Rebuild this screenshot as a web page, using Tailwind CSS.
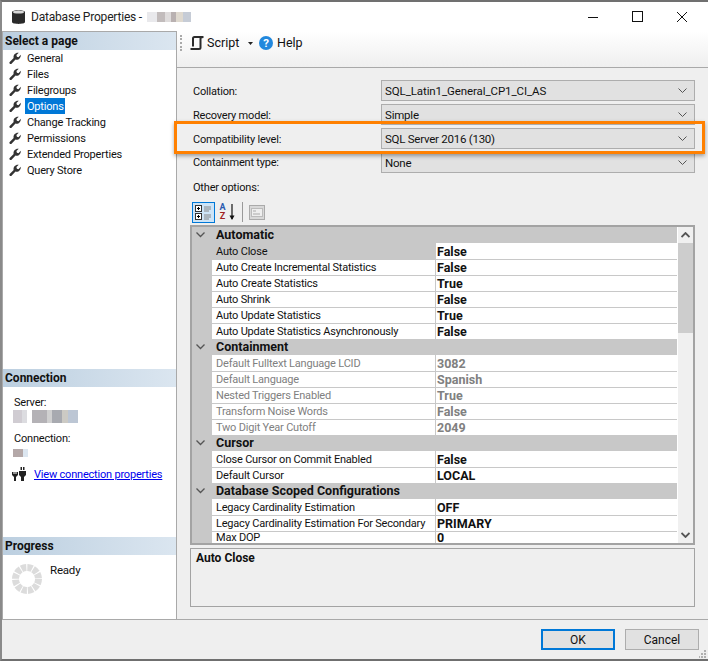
<!DOCTYPE html>
<html lang="en">
<head>
    <meta charset="UTF-8">
    <title>Database Properties</title>
    <script src="https://cdn.jsdelivr.net/npm/@tailwindcss/browser@4"></script>
</head>
<body class="bg-white font-['Roboto',sans-serif] text-[11px] tracking-[-0.2px] leading-4 text-[#111] overflow-hidden">
<div class="relative w-[708px] h-[661px] overflow-hidden flex flex-col border-t-2 border-t-[#707070] border-l-2 border-l-[#8a8a8a] border-b-2 border-b-[#6f6f6f]">

    <!-- Title bar -->
    <div class="h-[29px] flex items-center bg-white shrink-0">
        <svg class="ml-[9px] w-[15px] h-[16px]" viewBox="0 0 15 16"><path d="M1 3C1 0.500 14 0.500 14 3V13C14 15.500 1 15.500 1 13Z" fill="#2a2a2a"/><ellipse cx="7.500" cy="3" rx="5.500" ry="1.500" fill="#d8d8d8"/></svg>
        <span class="ml-[5px] text-[12px] text-[#222]">Database Properties -</span>
        <span class="ml-[5px] flex h-[10px] opacity-80">
            <span class="w-[10px] bg-[#e4e4e8]"></span><span class="w-[8px] bg-[#b4acac]"></span><span class="w-[6px] bg-[#d8d4d4]"></span><span class="w-[5px] bg-[#a89e9e]"></span><span class="w-[7px] bg-[#d8d0c4]"></span><span class="w-[8px] bg-[#b8c0cc]"></span>
        </span>
        <div class="ml-auto flex items-center gap-[33px] mr-[20px]">
            <svg class="w-[12px] h-[12px]" viewBox="0 0 12 12"><path d="M1 6.500H11" stroke="#111" fill="none"/></svg>
            <svg class="w-[11px] h-[11px]" viewBox="0 0 11 11"><rect x="0.500" y="0.500" width="10" height="10" stroke="#111" fill="none"/></svg>
            <svg class="w-[12px] h-[12px]" viewBox="0 0 12 12"><path d="M1 1L11 11M11 1L1 11" stroke="#111" fill="none"/></svg>
        </div>
    </div>

    <div class="flex flex-1 min-h-0">
        <!-- Left panel -->
        <div class="w-[175px] shrink-0 bg-white border-t border-t-[#a9a9a9] border-r border-r-[#a9a9a9] border-l border-l-[#a9a9a9] flex flex-col h-[589px]">
            <div class="h-[18px] px-[2px] font-bold text-[12px] tracking-normal bg-gradient-to-r from-[#bccfe0] to-[#dbe6f0] flex items-center">Select a page</div>
            <ul class="h-[319px]">
                <li class="h-[16px] flex items-center pl-[6px]"><svg class="w-[13px] h-[13px]" viewBox="0 0 14 14"><path d="M0.500 11L5 6.500C4.300 3 7 0.300 10.500 0.800L8 3.300L8.500 5.200L10.200 5.700L12.700 3C13 6.500 10 9.200 7 8.200L2.500 12.800C1.500 13.500 0 12.200 0.500 11Z" fill="#333"/></svg><span class="ml-[3px] px-[2px] pt-[2px] leading-[14px]">General</span></li>
                <li class="h-[16px] flex items-center pl-[6px]"><svg class="w-[13px] h-[13px]" viewBox="0 0 14 14"><path d="M0.500 11L5 6.500C4.300 3 7 0.300 10.500 0.800L8 3.300L8.500 5.200L10.200 5.700L12.700 3C13 6.500 10 9.200 7 8.200L2.500 12.800C1.500 13.500 0 12.200 0.500 11Z" fill="#333"/></svg><span class="ml-[3px] px-[2px] pt-[2px] leading-[14px]">Files</span></li>
                <li class="h-[16px] flex items-center pl-[6px]"><svg class="w-[13px] h-[13px]" viewBox="0 0 14 14"><path d="M0.500 11L5 6.500C4.300 3 7 0.300 10.500 0.800L8 3.300L8.500 5.200L10.200 5.700L12.700 3C13 6.500 10 9.200 7 8.200L2.500 12.800C1.500 13.500 0 12.200 0.500 11Z" fill="#333"/></svg><span class="ml-[3px] px-[2px] pt-[2px] leading-[14px]">Filegroups</span></li>
                <li class="h-[16px] flex items-center pl-[6px]"><svg class="w-[13px] h-[13px]" viewBox="0 0 14 14"><path d="M0.500 11L5 6.500C4.300 3 7 0.300 10.500 0.800L8 3.300L8.500 5.200L10.200 5.700L12.700 3C13 6.500 10 9.200 7 8.200L2.500 12.800C1.500 13.500 0 12.200 0.500 11Z" fill="#333"/></svg><span class="ml-[3px] w-[40px] px-[2px] pt-[2px] leading-[14px] bg-[#0078d7] text-white">Options</span></li>
                <li class="h-[16px] flex items-center pl-[6px]"><svg class="w-[13px] h-[13px]" viewBox="0 0 14 14"><path d="M0.500 11L5 6.500C4.300 3 7 0.300 10.500 0.800L8 3.300L8.500 5.200L10.200 5.700L12.700 3C13 6.500 10 9.200 7 8.200L2.500 12.800C1.500 13.500 0 12.200 0.500 11Z" fill="#333"/></svg><span class="ml-[3px] px-[2px] pt-[2px] leading-[14px]">Change Tracking</span></li>
                <li class="h-[16px] flex items-center pl-[6px]"><svg class="w-[13px] h-[13px]" viewBox="0 0 14 14"><path d="M0.500 11L5 6.500C4.300 3 7 0.300 10.500 0.800L8 3.300L8.500 5.200L10.200 5.700L12.700 3C13 6.500 10 9.200 7 8.200L2.500 12.800C1.500 13.500 0 12.200 0.500 11Z" fill="#333"/></svg><span class="ml-[3px] px-[2px] pt-[2px] leading-[14px]">Permissions</span></li>
                <li class="h-[16px] flex items-center pl-[6px]"><svg class="w-[13px] h-[13px]" viewBox="0 0 14 14"><path d="M0.500 11L5 6.500C4.300 3 7 0.300 10.500 0.800L8 3.300L8.500 5.200L10.200 5.700L12.700 3C13 6.500 10 9.200 7 8.200L2.500 12.800C1.500 13.500 0 12.200 0.500 11Z" fill="#333"/></svg><span class="ml-[3px] px-[2px] pt-[2px] leading-[14px]">Extended Properties</span></li>
                <li class="h-[16px] flex items-center pl-[6px]"><svg class="w-[13px] h-[13px]" viewBox="0 0 14 14"><path d="M0.500 11L5 6.500C4.300 3 7 0.300 10.500 0.800L8 3.300L8.500 5.200L10.200 5.700L12.700 3C13 6.500 10 9.200 7 8.200L2.500 12.800C1.500 13.500 0 12.200 0.500 11Z" fill="#333"/></svg><span class="ml-[3px] px-[2px] pt-[2px] leading-[14px]">Query Store</span></li>
            </ul>
            <div class="h-[18px] px-[2px] font-bold text-[12px] tracking-normal bg-gradient-to-r from-[#bccfe0] to-[#dbe6f0] flex items-center">Connection</div>
            <div class="h-[150px] pl-[11px] pt-[8px]">
                <div>Server:</div>
                <div class="flex h-[13px] -ml-[1px] -mt-[1px]">
                    <span class="w-[9px] bg-[#d0ccd2]"></span><span class="w-[5px] bg-[#dcdce0]"></span><span class="w-[5px] bg-white"></span><span class="w-[15px] bg-[#b4b2b6]"></span><span class="w-[5px] bg-[#d0d0d0]"></span><span class="w-[10px] bg-[#a8aab0]"></span><span class="w-[6px] bg-[#cccac4]"></span><span class="w-[10px] bg-[#bcc6d4]"></span>
                </div>
                <div class="mt-[8px]">Connection:</div>
                <div class="mt-[2px] -ml-[1px] flex h-[8px]"><span class="w-[10px] bg-[#b4a8a8]"></span><span class="w-[5px] bg-[#dce6f0]"></span></div>
                <div class="mt-[9px] h-[16px] flex items-center">
                    <svg class="w-[14px] h-[14px] -ml-[2px]" viewBox="0 0 14 14" fill="#222"><path d="M0 5H1.500V7H2.500V5H3.500V7H4.500V5H6V8L4 10V14H2V10L0 8Z"/><path d="M7 4H14V8L12 10V14H9V10L7 8Z"/><path d="M8.500 0H10V3H8.500ZM11 0H12.500V3H11Z"/></svg>
                    <a class="ml-[8px] pt-[2px] text-[#0000ee] underline whitespace-nowrap" href="#">View connection properties</a>
                </div>
            </div>
            <div class="h-[18px] px-[2px] font-bold text-[12px] tracking-normal bg-gradient-to-r from-[#bccfe0] to-[#dbe6f0] flex items-center">Progress</div>
            <div class="flex-1 flex pl-[9px] pt-[9px]">
                <svg class="w-[30px] h-[30px]" viewBox="0 0 30 30"><circle cx="15" cy="15" r="11.500" fill="none" stroke="#dcdcdc" stroke-width="7" stroke-dasharray="5 1.020"/></svg>
                <span class="ml-[8px] -mt-[2px] text-[11.5px]">Ready</span>
            </div>
        </div>

        <!-- Right panel -->
        <div class="flex-1 min-w-0 bg-[#efefef] flex flex-col">
            <div class="h-[37px] flex items-start bg-gradient-to-b from-white to-[#efefef] border-b border-b-[#a9a9a9] text-[12.5px] tracking-normal shrink-0">
                <div class="h-[24px] flex items-center">
                    <div class="ml-[3px] h-[16px] w-[2px] border-l-2 border-dotted border-l-[#aaa]"></div>
                    <svg class="ml-[8px] w-[14px] h-[14px]" viewBox="0 0 14 14"><path d="M0.500 13H9C10 13 10.500 12.500 10.500 11.500V2.500C10.500 1.500 11 1 13.500 1H4.500C3.500 1 3 1.500 3 2.500V10.500" fill="none" stroke="#2b2b2b" stroke-width="2"/></svg>
                    <span class="ml-[3px] w-[41px]">Script</span>
                    <svg class="w-[5px] h-[3px]" viewBox="0 0 5 3"><path d="M0 0H5L2.500 3Z" fill="#222"/></svg>
                    <svg class="ml-[6px] w-[14px] h-[14px]" viewBox="0 0 14 14"><circle cx="7" cy="7" r="7" fill="#2288dd"/><text x="7" y="11.200" font-size="11.500" font-weight="700" fill="#fff" text-anchor="middle">?</text></svg>
                    <span class="ml-[4px]">Help</span>
                </div>
            </div>

            <div class="flex-1 px-[13px] pt-[12px] flex flex-col">
                <!-- form rows -->
                <div class="flex items-center h-[21px] mb-[3px]"><span class="w-[191px] pl-[3px] pt-[2px]">Collation:</span><div class="flex-1 h-[21px] bg-[#e1e1e1] border border-[#adadad] flex items-center justify-between pl-[3px] pr-[7px] text-[11.5px] tracking-[-0.1px]"><span>SQL_Latin1_General_CP1_CI_AS</span><svg class="w-[9px] h-[6px]" viewBox="0 0 9 6"><path d="M0.500 0.500L4.500 4.500L8.500 0.500" fill="none" stroke="#555"/></svg></div></div>
                <div class="flex items-center h-[21px] mb-[3px]"><span class="w-[191px] pl-[3px] pt-[2px]">Recovery model:</span><div class="flex-1 h-[21px] bg-[#e1e1e1] border border-[#adadad] flex items-center justify-between pl-[3px] pr-[7px] text-[11.5px] tracking-[-0.2px]"><span>Simple</span><svg class="w-[9px] h-[6px]" viewBox="0 0 9 6"><path d="M0.500 0.500L4.500 4.500L8.500 0.500" fill="none" stroke="#555"/></svg></div></div>
                <div class="flex items-center h-[21px] mb-[3px]"><span class="w-[191px] pl-[3px] pt-[2px]">Compatibility level:</span><div class="flex-1 h-[21px] bg-[#e1e1e1] border border-[#adadad] flex items-center justify-between pl-[3px] pr-[7px] text-[11.5px] tracking-[-0.25px]"><span>SQL Server 2016 (130)</span><svg class="w-[9px] h-[6px]" viewBox="0 0 9 6"><path d="M0.500 0.500L4.500 4.500L8.500 0.500" fill="none" stroke="#555"/></svg></div></div>
                <div class="flex items-center h-[21px]"><span class="w-[191px] pl-[3px]">Containment type:</span><div class="flex-1 h-[21px] bg-[#e1e1e1] border border-[#adadad] flex items-center justify-between pl-[3px] pr-[7px] text-[11.5px] tracking-[-0.2px]"><span>None</span><svg class="w-[9px] h-[6px]" viewBox="0 0 9 6"><path d="M0.500 0.500L4.500 4.500L8.500 0.500" fill="none" stroke="#555"/></svg></div></div>

                <div class="mt-[7px] pl-[3px]">Other options:</div>

                <!-- property grid toolbar -->
                <div class="mt-[5px] h-[22px] flex items-center pl-[2px]">
                    <div class="w-[23px] h-[21px] border border-[#0078d7] bg-[#cde4f7] flex items-center justify-center">
                        <svg class="w-[17px] h-[15px]" viewBox="0 0 17 15"><rect x="0.500" y="0.500" width="6" height="6" fill="#fff" stroke="#333"/><path d="M2 3.500H5M3.500 2V5" stroke="#000"/><rect x="0.500" y="8.500" width="6" height="6" fill="#fff" stroke="#333"/><path d="M2 11.500H5M3.500 10V13" stroke="#000"/><path d="M9 2H16M9 4H16M9 6H14M9 10H16M9 12H16M9 14H14" stroke="#888"/></svg>
                    </div>
                    <span class="ml-[3px] w-[9px] text-[9px] leading-[9px] font-bold flex flex-col items-center"><span class="h-[9px] text-[#2a5ab0]">A</span><span class="h-[9px] text-[#a02020]">Z</span></span>
                    <svg class="ml-[1px] w-[8px] h-[18px]" viewBox="0 0 8 18"><path d="M4 1V16" stroke="#111" stroke-width="1.200" fill="none"/><path d="M1.500 12.500H6.500L4 17Z" fill="#111"/></svg>
                    <div class="ml-[6px] w-px h-[20px] bg-[#999]"></div>
                    <svg class="ml-[6px] w-[16px] h-[15px]" viewBox="0 0 16 15"><rect x="0.500" y="0.500" width="15" height="14" fill="#d8d8d8" stroke="#aaa"/><rect x="2.500" y="3.500" width="11" height="8" fill="#eee" stroke="#bbb"/><path d="M4 6H7M4 9H11" stroke="#aaa"/></svg>
                </div>

                <!-- property grid -->
                <div class="mt-[2px] h-[320px] border-2 border-[#a3a3a3] flex bg-[#c8c8c8] overflow-hidden whitespace-nowrap">
                    <div class="w-[485px] shrink-0">
                        <div class="h-[16px] flex bg-[#c8c8c8] font-bold text-[12.5px] tracking-normal"><span class="w-[24px] pl-[4px] flex items-center"><svg class="w-[9px] h-[6px]" viewBox="0 0 9 6"><path d="M0.500 0.500L4.500 4.500L8.500 0.500" fill="none" stroke="#555" stroke-width="1.300"/></svg></span>Automatic</div>
                        <div class="h-[16px] flex"><span class="w-[20px]"></span><span class="w-[223px] bg-[#c8c8c8] pl-[4px] pt-[1px] leading-[15px]">Auto Close</span><span class="flex-1 bg-white pl-[1px] pt-[1px] leading-[15px] font-bold text-[12.5px] tracking-normal border-l border-l-[#c8c8c8]">False</span></div>
                        <div class="h-[16px] flex"><span class="w-[20px]"></span><span class="w-[223px] bg-white border-t border-t-[#c8c8c8] pl-[4px] leading-[16px]">Auto Create Incremental Statistics</span><span class="flex-1 bg-white pl-[1px] font-bold text-[12.5px] tracking-normal border-l border-t border-[#c8c8c8] leading-[16px]">False</span></div>
                        <div class="h-[16px] flex"><span class="w-[20px]"></span><span class="w-[223px] bg-white border-t border-t-[#c8c8c8] pl-[4px] leading-[16px]">Auto Create Statistics</span><span class="flex-1 bg-white pl-[1px] font-bold text-[12.5px] tracking-normal border-l border-t border-[#c8c8c8] leading-[16px]">True</span></div>
                        <div class="h-[16px] flex"><span class="w-[20px]"></span><span class="w-[223px] bg-white border-t border-t-[#c8c8c8] pl-[4px] leading-[16px]">Auto Shrink</span><span class="flex-1 bg-white pl-[1px] font-bold text-[12.5px] tracking-normal border-l border-t border-[#c8c8c8] leading-[16px]">False</span></div>
                        <div class="h-[16px] flex"><span class="w-[20px]"></span><span class="w-[223px] bg-white border-t border-t-[#c8c8c8] pl-[4px] leading-[16px]">Auto Update Statistics</span><span class="flex-1 bg-white pl-[1px] font-bold text-[12.5px] tracking-normal border-l border-t border-[#c8c8c8] leading-[16px]">True</span></div>
                        <div class="h-[16px] flex"><span class="w-[20px]"></span><span class="w-[223px] bg-white border-t border-t-[#c8c8c8] pl-[4px] leading-[16px]">Auto Update Statistics Asynchronously</span><span class="flex-1 bg-white pl-[1px] font-bold text-[12.5px] tracking-normal border-l border-t border-[#c8c8c8] leading-[16px]">False</span></div>

                        <div class="h-[16px] flex bg-[#c8c8c8] font-bold text-[12.5px] tracking-normal"><span class="w-[24px] pl-[4px] flex items-center"><svg class="w-[9px] h-[6px]" viewBox="0 0 9 6"><path d="M0.500 0.500L4.500 4.500L8.500 0.500" fill="none" stroke="#555" stroke-width="1.300"/></svg></span>Containment</div>
                        <div class="h-[16px] flex text-[#808080]"><span class="w-[20px]"></span><span class="w-[223px] bg-white pl-[4px] pt-[1px] leading-[15px]">Default Fulltext Language LCID</span><span class="flex-1 bg-white pl-[1px] pt-[1px] leading-[15px] font-bold text-[12.5px] tracking-normal border-l border-l-[#c8c8c8]">3082</span></div>
                        <div class="h-[16px] flex text-[#808080]"><span class="w-[20px]"></span><span class="w-[223px] bg-white border-t border-t-[#c8c8c8] pl-[4px] leading-[16px]">Default Language</span><span class="flex-1 bg-white pl-[1px] font-bold text-[12.5px] tracking-normal border-l border-t border-[#c8c8c8] leading-[16px]">Spanish</span></div>
                        <div class="h-[16px] flex text-[#808080]"><span class="w-[20px]"></span><span class="w-[223px] bg-white border-t border-t-[#c8c8c8] pl-[4px] leading-[16px]">Nested Triggers Enabled</span><span class="flex-1 bg-white pl-[1px] font-bold text-[12.5px] tracking-normal border-l border-t border-[#c8c8c8] leading-[16px]">True</span></div>
                        <div class="h-[16px] flex text-[#808080]"><span class="w-[20px]"></span><span class="w-[223px] bg-white border-t border-t-[#c8c8c8] pl-[4px] leading-[16px]">Transform Noise Words</span><span class="flex-1 bg-white pl-[1px] font-bold text-[12.5px] tracking-normal border-l border-t border-[#c8c8c8] leading-[16px]">False</span></div>
                        <div class="h-[16px] flex text-[#808080]"><span class="w-[20px]"></span><span class="w-[223px] bg-white border-t border-t-[#c8c8c8] pl-[4px] leading-[16px]">Two Digit Year Cutoff</span><span class="flex-1 bg-white pl-[1px] font-bold text-[12.5px] tracking-normal border-l border-t border-[#c8c8c8] leading-[16px]">2049</span></div>

                        <div class="h-[16px] flex bg-[#c8c8c8] font-bold text-[12.5px] tracking-normal"><span class="w-[24px] pl-[4px] flex items-center"><svg class="w-[9px] h-[6px]" viewBox="0 0 9 6"><path d="M0.500 0.500L4.500 4.500L8.500 0.500" fill="none" stroke="#555" stroke-width="1.300"/></svg></span>Cursor</div>
                        <div class="h-[16px] flex"><span class="w-[20px]"></span><span class="w-[223px] bg-white pl-[4px] pt-[1px] leading-[15px]">Close Cursor on Commit Enabled</span><span class="flex-1 bg-white pl-[1px] pt-[1px] leading-[15px] font-bold text-[12.5px] tracking-normal border-l border-l-[#c8c8c8]">False</span></div>
                        <div class="h-[16px] flex"><span class="w-[20px]"></span><span class="w-[223px] bg-white border-t border-t-[#c8c8c8] pl-[4px] leading-[16px]">Default Cursor</span><span class="flex-1 bg-white pl-[1px] font-bold text-[12.5px] tracking-normal border-l border-t border-[#c8c8c8] leading-[16px]">LOCAL</span></div>

                        <div class="h-[16px] flex bg-[#c8c8c8] font-bold text-[12.5px] tracking-normal"><span class="w-[24px] pl-[4px] flex items-center"><svg class="w-[9px] h-[6px]" viewBox="0 0 9 6"><path d="M0.500 0.500L4.500 4.500L8.500 0.500" fill="none" stroke="#555" stroke-width="1.300"/></svg></span>Database Scoped Configurations</div>
                        <div class="h-[16px] flex"><span class="w-[20px]"></span><span class="w-[223px] bg-white pl-[4px] pt-[1px] leading-[15px]">Legacy Cardinality Estimation</span><span class="flex-1 bg-white pl-[1px] pt-[1px] leading-[15px] font-bold text-[12.5px] tracking-normal border-l border-l-[#c8c8c8]">OFF</span></div>
                        <div class="h-[16px] flex"><span class="w-[20px]"></span><span class="w-[223px] bg-white border-t border-t-[#c8c8c8] pl-[4px] leading-[16px]">Legacy Cardinality Estimation For Secondary</span><span class="flex-1 bg-white pl-[1px] font-bold text-[12.5px] tracking-normal border-l border-t border-[#c8c8c8] leading-[16px]">PRIMARY</span></div>
                        <div class="h-[12px] flex"><span class="w-[20px]"></span><span class="w-[223px] bg-white border-t border-t-[#c8c8c8] pl-[4px] leading-[11px]">Max DOP</span><span class="flex-1 bg-white pl-[1px] font-bold text-[12.5px] tracking-normal border-l border-t border-[#c8c8c8] leading-[11px]">0</span></div>
                    </div>
                    <!-- scrollbar -->
                    <div class="flex-1 bg-[#f0f0f0] border-l border-l-white flex flex-col">
                        <div class="h-[16px] flex items-center justify-center"><svg class="w-[9px] h-[6px]" viewBox="0 0 9 6"><path d="M0.500 5L4.500 1L8.500 5" fill="none" stroke="#555" stroke-width="1.800"/></svg></div>
                        <div class="h-[90px] bg-[#cdcdcd]"></div>
                        <div class="mt-auto h-[16px] flex items-center justify-center"><svg class="w-[9px] h-[6px]" viewBox="0 0 9 6"><path d="M0.500 1L4.500 5L8.500 1" fill="none" stroke="#555" stroke-width="1.800"/></svg></div>
                    </div>
                </div>

                <!-- description -->
                <div class="mt-[3px] h-[59px] border border-[#a3a3a3] px-[5px] pt-[1px] font-bold text-[12px] tracking-normal">Auto Close</div>
            </div>
        </div>
    </div>

    <!-- Footer -->
    <div class="absolute left-0 right-0 bottom-0 h-[40px] bg-[#efefef] border-t border-t-[#a9a9a9] flex items-start justify-end gap-[10px] pt-[9px] pr-[9px] text-[12px] tracking-normal">
        <button class="w-[74px] h-[21px] bg-[#e1e1e1] border-2 border-[#0078d7] flex items-center justify-center">OK</button>
        <button class="w-[74px] h-[21px] bg-[#e1e1e1] border border-[#adadad] flex items-center justify-center">Cancel</button>
    </div>
    <!-- Resize grip -->
    <svg class="absolute right-[1px] bottom-[1px] w-[8px] h-[8px]" viewBox="0 0 8 8" fill="#b0b0b0"><path d="M5 0H7V2H5ZM2 3H4V5H2ZM5 3H7V5H5ZM0 6H1V8H0ZM2 6H4V8H2ZM5 6H7V8H5Z"/></svg>

    <!-- Orange highlight annotation -->
    <div class="absolute left-[172px] top-[119px] w-[531px] h-[33px] border-[3px] border-[#ff8000] shadow-[0_2px_4px_rgba(0,0,0,0.35)]"></div>
</div>
</body>
</html>
